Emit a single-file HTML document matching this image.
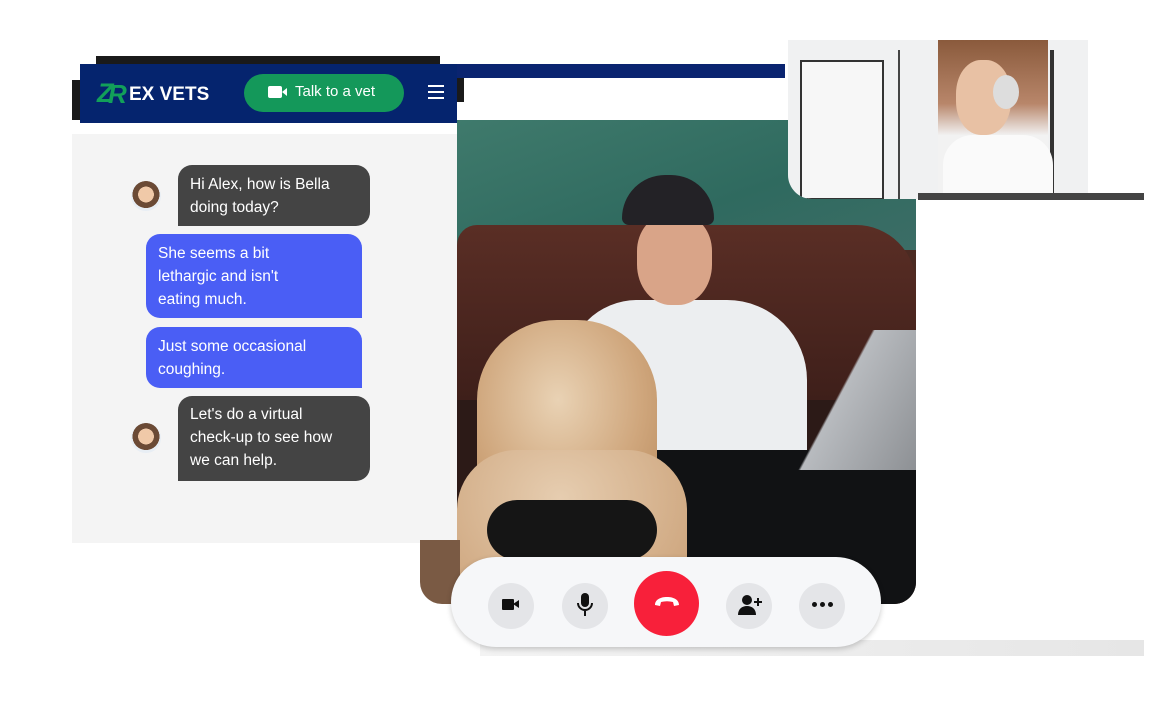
<!DOCTYPE html>
<html><head><meta charset="utf-8"><style>
*{margin:0;padding:0;box-sizing:border-box}
body{width:1150px;height:701px;background:#fff;position:relative;overflow:hidden;font-family:"Liberation Sans",sans-serif}
.a{position:absolute}
.b{position:absolute;color:#fff;font-size:15.5px;line-height:23px;padding:8px 12px;white-space:nowrap}
.dk{background:#444;border-radius:14px 14px 14px 0}
.bl{background:#4a5ef5;border-radius:14px 14px 0 14px}
.av{position:absolute;width:30px;height:30px;border-radius:50%;background:radial-gradient(circle at 50% 45%,#f0c9a8 0 35%,#6b4a35 36% 60%,#e8eef4 61%)}
.cb{position:absolute;top:583px;width:46px;height:46px;border-radius:50%;background:#e4e5e8}
</style></head><body>
<div class="a" style="left:96px;top:56px;width:344px;height:14px;background:#1a1a1a"></div>
<div class="a" style="left:72px;top:80px;width:12px;height:40px;background:#1a1a1a"></div>
<div class="a" style="left:440px;top:64px;width:345px;height:14px;background:#0a2470"></div>
<div class="a" style="left:440px;top:78px;width:24px;height:24px;background:#1a1a1a"></div>
<div class="a" style="left:80px;top:64px;width:377px;height:59px;background:#05246e"></div>
<div class="a" style="left:97px;top:78px;font-size:27px;font-weight:bold;color:#12a05a;font-style:italic;letter-spacing:-3px">Z</div>
<div class="a" style="left:108px;top:79px;font-size:26px;font-weight:bold;color:#12a05a;font-style:italic">R</div>
<div class="a" style="left:129px;top:84px;font-size:19px;font-weight:bold;color:#fff">EX VETS</div>
<div class="a" style="left:244px;top:74px;width:160px;height:38px;border-radius:19px;background:#14985a"></div>
<div class="a" style="left:268px;top:86px;width:14px;height:12px;background:#fff;border-radius:2px"></div>
<div class="a" style="left:282px;top:88px;width:0;height:0;border-top:4px solid transparent;border-bottom:4px solid transparent;border-right:5px solid #fff"></div>
<div class="a" style="left:295px;top:83px;font-size:15px;color:#fff">Talk to a vet</div>
<div class="a" style="left:428px;top:85px;width:16px;height:2px;background:#fff;box-shadow:0 6px 0 #fff,0 12px 0 #fff"></div>
<div class="a" style="left:72px;top:134px;width:386px;height:409px;background:#f4f4f4"></div>
<div class="av" style="left:131px;top:181px"></div>
<div class="b dk" style="left:178px;top:165px;width:192px;height:61px">Hi Alex, how is Bella<br>doing today?</div>
<div class="b bl" style="left:146px;top:234px;width:216px;height:84px">She seems a bit<br>lethargic and isn't<br>eating much.</div>
<div class="b bl" style="left:146px;top:327px;width:216px;height:61px">Just some occasional<br>coughing.</div>
<div class="av" style="left:131px;top:423px"></div>
<div class="b dk" style="left:178px;top:396px;width:192px;height:85px;padding-top:7px">Let's do a virtual<br>check-up to see how<br>we can help.</div>
<div class="a" style="left:457px;top:120px;width:459px;height:484px;overflow:hidden;border-radius:0 0 22px 0;background:#4b2a22">
 <div class="a" style="left:0;top:0;width:459px;height:130px;background:linear-gradient(160deg,#3f7a6c,#2f6a5f 60%,#3c6d66)"></div>
 <div class="a" style="left:0;top:105px;width:459px;height:175px;background:linear-gradient(180deg,#5a2e25,#3e1f1a);border-radius:20px 60px 0 0"></div>
 <div class="a" style="left:0;top:280px;width:459px;height:204px;background:#2c1a17"></div>
 <div class="a" style="left:110px;top:180px;width:240px;height:180px;background:#eceef0;border-radius:70px 80px 20px 20px"></div>
 <div class="a" style="left:180px;top:95px;width:75px;height:90px;background:#d9a488;border-radius:40% 40% 45% 45%"></div>
 <div class="a" style="left:165px;top:55px;width:92px;height:50px;background:#232226;border-radius:50px 50px 8px 8px"></div>
 <div class="a" style="left:200px;top:330px;width:259px;height:160px;background:#111214"></div>
 <div class="a" style="left:270px;top:210px;width:190px;height:140px;background:linear-gradient(118deg,transparent 55%,#b8bbbf 56%,#8d9094);"></div>
 <div class="a" style="left:20px;top:200px;width:180px;height:200px;background:radial-gradient(ellipse at 45% 40%,#e9d2b4,#cfa67c 60%,#b88a5d);border-radius:80px 80px 40px 40px"></div>
 <div class="a" style="left:0;top:330px;width:230px;height:160px;background:radial-gradient(ellipse at 45% 30%,#e6cdb0,#c99e74);border-radius:60px 60px 0 0"></div>
 <div class="a" style="left:30px;top:380px;width:170px;height:60px;background:#151515;border-radius:40px"></div>
</div>
<div class="a" style="left:420px;top:540px;width:40px;height:64px;background:#7a5a44;border-radius:0 0 0 22px"></div>
<div class="a" style="left:1072px;top:40px;width:8px;height:10px;background:#333"></div>
<div class="a" style="left:788px;top:40px;width:300px;height:159px;border-radius:0 0 0 24px;overflow:hidden;background:#f0f1f2">
 <div class="a" style="left:12px;top:20px;width:84px;height:140px;border:2px solid #333;background:#f7f7f7"></div>
 <div class="a" style="left:110px;top:10px;width:2px;height:150px;background:#444"></div>
 <div class="a" style="left:262px;top:10px;width:4px;height:150px;background:#333"></div>
 <div class="a" style="left:150px;top:0;width:110px;height:159px;background:linear-gradient(180deg,#8a5a3c,#b8866a 40%,#f2f2f2 60%)"></div>
 <div class="a" style="left:168px;top:20px;width:55px;height:75px;background:#e8c1a4;border-radius:45%"></div>
 <div class="a" style="left:205px;top:35px;width:26px;height:34px;background:#ddd;border-radius:50%"></div>
 <div class="a" style="left:155px;top:95px;width:110px;height:64px;background:#fafafa;border-radius:30px 30px 0 0"></div>
</div>
<div class="a" style="left:918px;top:193px;width:226px;height:7px;background:#444"></div>
<div class="a" style="left:480px;top:640px;width:664px;height:16px;background:linear-gradient(90deg,#f3f3f3,#e6e6e6)"></div>
<div class="a" style="left:451px;top:557px;width:430px;height:90px;border-radius:45px;background:#f6f7f9;box-shadow:0 2px 6px rgba(0,0,0,.2)"></div>
<div class="cb" style="left:488px"></div>
<div class="a" style="left:502px;top:599px;width:12px;height:11px;background:#111;border-radius:1px"></div>
<div class="a" style="left:513px;top:600px;border-top:4.5px solid transparent;border-bottom:4.5px solid transparent;border-right:6px solid #111"></div>
<div class="cb" style="left:562px"></div>
<svg class="a" style="left:575px;top:592px" width="20" height="26" viewBox="0 0 20 26"><rect x="6" y="1" width="8" height="14" rx="4" fill="#111"/><path d="M3 11a7 7 0 0 0 14 0M10 18v6" stroke="#111" stroke-width="2" fill="none"/></svg>
<div class="a" style="left:634px;top:571px;width:65px;height:65px;border-radius:50%;background:#f8203a"></div>
<svg class="a" style="left:652px;top:594px" width="30" height="14" viewBox="0 0 30 14"><path d="M3 11c0-5 5-8 12-8s12 3 12 8l-5 1-1-4c-4-1-8-1-12 0l-1 4z" fill="#fff"/></svg>
<div class="cb" style="left:726px"></div>
<svg class="a" style="left:737px;top:593px" width="26" height="24" viewBox="0 0 26 24"><circle cx="10" cy="7" r="5" fill="#111"/><path d="M1 22c0-6 4-9 9-9s9 3 9 9z" fill="#111"/><path d="M21 5v8M17 9h8" stroke="#111" stroke-width="2"/></svg>
<div class="cb" style="left:799px"></div>
<div class="a" style="left:812px;top:602px;width:5px;height:5px;border-radius:50%;background:#111;box-shadow:8px 0 0 #111,16px 0 0 #111"></div>
</body></html>
